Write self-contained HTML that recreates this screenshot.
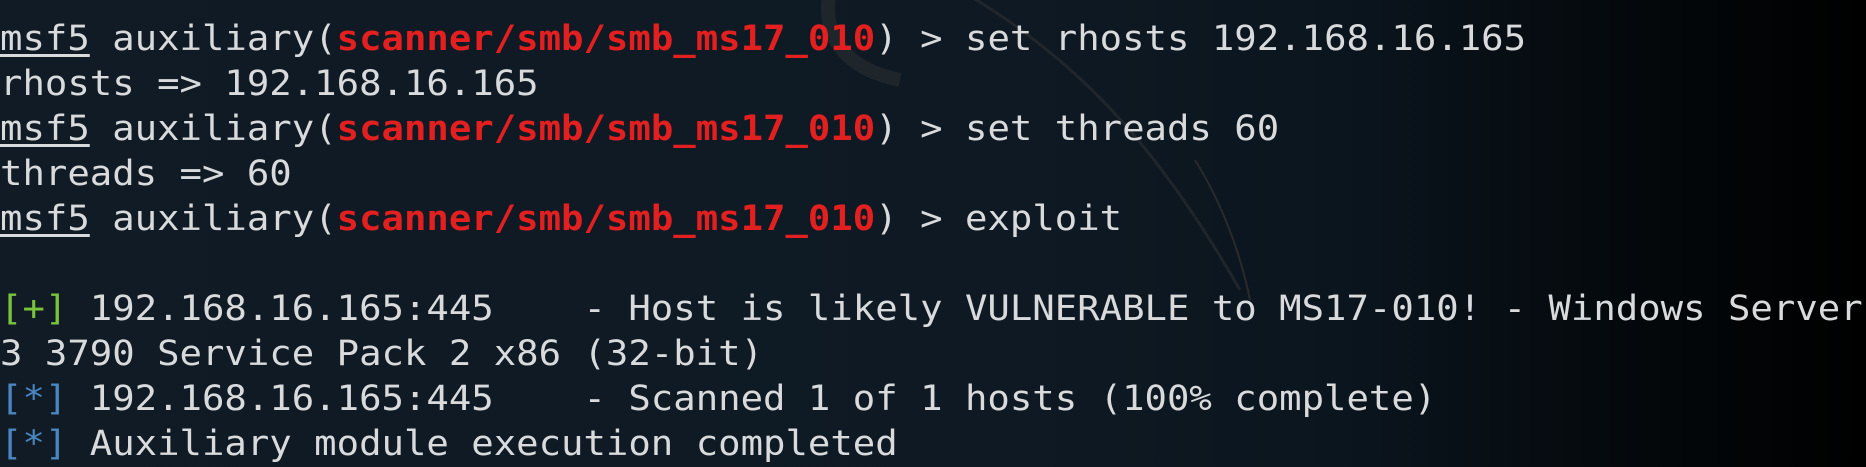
<!DOCTYPE html>
<html><head><style>
html,body{margin:0;padding:0;}
body{width:1866px;height:458px;overflow:hidden;position:relative;
background:linear-gradient(90deg,#101b25 0%,#0e1923 55%,#0b151e 72%,#04080b 88%,#000 100%);}
.t{position:absolute;left:0;top:17px;width:1800px;transform:scaleX(1.065);transform-origin:0 0;
font-family:"DejaVu Sans Mono","Liberation Mono",monospace;font-size:35px;line-height:45px;color:#d8dadc;white-space:pre;}
.r{color:#e3201f;font-weight:bold;}
.u{text-decoration:underline;text-underline-offset:4px;}
.g{color:#79c53a;}
.b{color:#4a86c0;}
svg{position:absolute;left:0;top:0;}
</style></head><body>
<svg width="1866" height="458"><path d="M830 -10 C820 40 850 70 900 80" stroke="#2a2d31" stroke-width="14" fill="none" opacity="0.6"/><path d="M960 -10 C1080 60 1160 150 1240 290" stroke="#2a2c30" stroke-width="3" fill="none" opacity="0.7"/><path d="M1195 160 C1220 200 1240 250 1250 300" stroke="#2a2a2c" stroke-width="2" fill="none"/></svg>
<div class="t"><span class="u">msf5</span> auxiliary(<span class="r">scanner/smb/smb_ms17_010</span>) &gt; set rhosts 192.168.16.165
rhosts =&gt; 192.168.16.165
<span class="u">msf5</span> auxiliary(<span class="r">scanner/smb/smb_ms17_010</span>) &gt; set threads 60
threads =&gt; 60
<span class="u">msf5</span> auxiliary(<span class="r">scanner/smb/smb_ms17_010</span>) &gt; exploit

<span class="g">[+]</span> 192.168.16.165:445    - Host is likely VULNERABLE to MS17-010! - Windows Server 200
3 3790 Service Pack 2 x86 (32-bit)
<span class="b">[*]</span> 192.168.16.165:445    - Scanned 1 of 1 hosts (100% complete)
<span class="b">[*]</span> Auxiliary module execution completed</div>
</body></html>
